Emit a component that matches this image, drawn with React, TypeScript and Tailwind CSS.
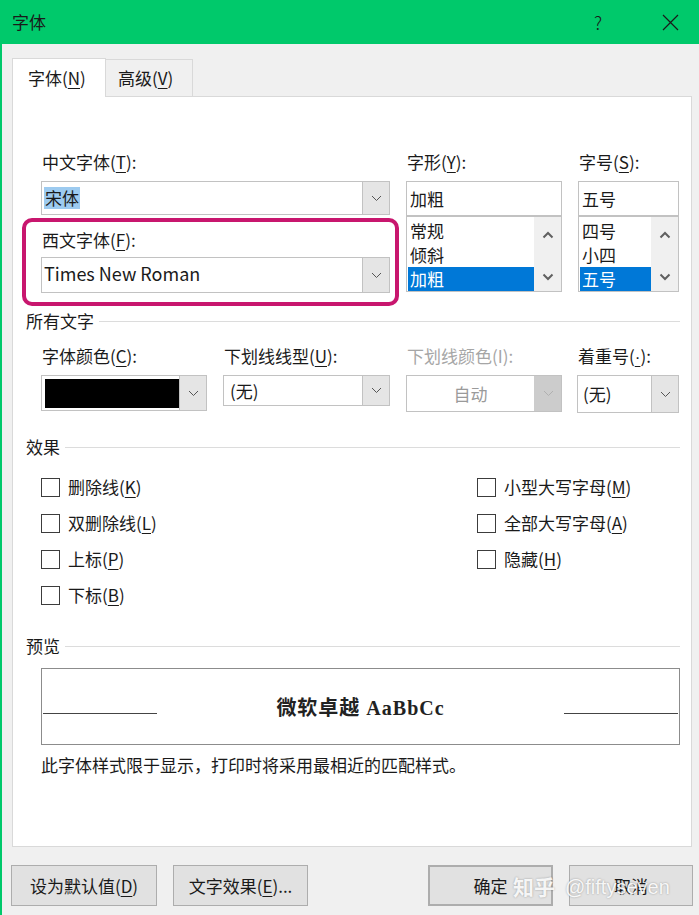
import React from 'react';
import clsx from 'clsx';

const U = ({ children }: { children: React.ReactNode }) => (
	<span className="underline decoration-1 underline-offset-[3px]">{children}</span>
);

const Chevron = ({ className }: { className?: string }) => (
	<svg width="11" height="7" viewBox="0 0 11 7" className={className}>
		<path d="M1 1 L5.5 5.5 L10 1" fill="none" stroke="currentColor" strokeWidth="1" />
	</svg>
);

const ScrollArrow = ({ up }: { up?: boolean }) => (
	<svg width="12" height="8" viewBox="0 0 12 8" className="text-[#606060]">
		<path d={up ? 'M1.5 6.5 L6 2 L10.5 6.5' : 'M1.5 1.5 L6 6 L10.5 1.5'} fill="none" stroke="currentColor" strokeWidth="2" />
	</svg>
);

const Label = ({ children, disabled }: { children: React.ReactNode; disabled?: boolean }) => (
	<div className={clsx('h-[24px] whitespace-nowrap pl-px leading-[24px]', disabled && 'text-[#a6a6a6]')}>{children}</div>
);

const Combo = ({
	className,
	children,
	disabled,
}: {
	className?: string;
	children?: React.ReactNode;
	disabled?: boolean;
}) => (
	<div className={clsx('flex border border-[#c2c2c2] bg-white', className)}>
		<div className="flex min-w-0 flex-1 items-center">{children}</div>
		<div
			className={clsx(
				'flex w-[27px] items-center justify-center border-l',
				disabled ? 'border-[#cccccc] bg-[#cccccc] text-[#b0b0b0]' : 'border-[#c2c2c2] bg-[#e5e5e5] text-[#555555]'
			)}
		>
			<Chevron />
		</div>
	</div>
);

const ListBox = ({ items, selected }: { items: string[]; selected: number }) => (
	<div className="flex h-[76px] border border-[#c2c2c2] bg-white">
		<div className="flex-1 pl-px pt-[2px]">
			{items.map((item, i) => (
				<div
					key={item}
					className={clsx('h-[24px] pl-[2px] leading-[24px]', i === selected && 'bg-[#0078d7] text-white')}
				>
					{item}
				</div>
			))}
		</div>
		<div className="flex w-[27px] flex-col items-center justify-between bg-[#f0f0f0] pb-[10px] pt-[14px]">
			<ScrollArrow up />
			<ScrollArrow />
		</div>
	</div>
);

const Heading = ({ children, className }: { children: React.ReactNode; className?: string }) => (
	<div className={clsx('ml-[4px] flex h-[24px] items-center gap-[5px]', className)}>
		<span className="leading-[24px]">{children}</span>
		<div className="h-px flex-1 bg-[#dcdcdc]" />
	</div>
);

const CheckBox = ({ children }: { children: React.ReactNode }) => (
	<div className="flex h-[24px] items-center gap-[8px]">
		<div className="h-[19px] w-[19px] border border-[#3c3c3c] bg-white" />
		<span className="leading-[24px]">{children}</span>
	</div>
);

const Button = ({ children, className }: { children: React.ReactNode; className?: string }) => (
	<div className={clsx('flex h-[41px] items-center justify-center border border-[#adadad] bg-[#e1e1e1]', className)}>
		{children}
	</div>
);

export default function App() {
	return (
		<div className="flex h-[915px] w-[699px] flex-col border-l-2 border-[#00c96b] bg-[#f0f0f0] text-[17px] text-[#1a1a1a] [font-family:'Noto_Sans_CJK_SC','Liberation_Sans',sans-serif]">
			{/* title bar */}
			<div className="flex h-[44px] shrink-0 items-center bg-[#00c96b] pl-[10px]">
				<span className="flex-1">字体</span>
				<span className="mr-[60px] text-[18px] font-light">?</span>
				<svg width="17" height="17" viewBox="0 0 17 17" className="mr-[20px]">
					<path d="M1 1 L16 16 M16 1 L1 16" stroke="#1a1a1a" strokeWidth="1.2" />
				</svg>
			</div>

			{/* tabs */}
			<div className="ml-[10px] mt-[14px] flex items-end">
				<div className="relative z-10 -mb-px flex h-[39px] w-[94px] items-center border border-b-0 border-[#d9d9d9] bg-white pl-[15px]">
					字体(<U>N</U>)
				</div>
				<div className="flex h-[37px] w-[87px] items-center border border-b-0 border-l-0 border-[#d9d9d9] bg-[#f0f0f0] pl-[12px]">
					高级(<U>V</U>)
				</div>
			</div>

			{/* panel */}
			<div className="ml-[10px] h-[751px] w-[680px] border border-[#d9d9d9] bg-white pl-[9px] pr-[11px] pt-[53px]">
				{/* fonts */}
				<div className="flex">
					<div className="w-[377px]">
						<div className="pl-[19px]">
							<Label>
								中文字体(<U>T</U>):
							</Label>
							<Combo className="mt-[7px] h-[34px] w-[349px]">
								<span className="ml-[2px] bg-[#9dcbf0] px-px leading-[22px]">宋体</span>
							</Combo>
						</div>
						<div className="mt-[3px] w-[377px] rounded-[10px] border-4 border-[#c8166e] pb-[9px] pl-[15px] pt-[6px]">
							<Label>
								西文字体(<U>F</U>):
							</Label>
							<Combo className="mt-[5px] h-[36px] w-[349px]">
								<span className="pb-[3px] pl-[2px] text-[18px]">Times New Roman</span>
							</Combo>
						</div>
					</div>
					<div className="ml-[7px] w-[156px]">
						<Label>
							字形(<U>Y</U>):
						</Label>
						<div className="mt-[7px] flex h-[35px] items-center border border-[#c2c2c2] bg-white pl-[3px]">加粗</div>
						<ListBox items={['常规', '倾斜', '加粗']} selected={2} />
					</div>
					<div className="ml-[16px] w-[101px]">
						<Label>
							字号(<U>S</U>):
						</Label>
						<div className="mt-[7px] flex h-[35px] items-center border border-[#c2c2c2] bg-white pl-[3px]">五号</div>
						<ListBox items={['四号', '小四', '五号']} selected={2} />
					</div>
				</div>

				{/* all text */}
				<Heading className="mt-[3px]">所有文字</Heading>
				<div className="mt-[11px] flex items-start gap-[16px] pl-[19px]">
					<div className="w-[166px]">
						<Label>
							字体颜色(<U>C</U>):
						</Label>
						<Combo className="mt-[7px] h-[36px]">
							<div className="ml-[3px] h-[29px] flex-1 bg-black" />
						</Combo>
					</div>
					<div className="w-[167px]">
						<Label>
							下划线线型(<U>U</U>):
						</Label>
						<Combo className="mt-[7px] h-[31px]">
							<span className="pl-[6px]">(无)</span>
						</Combo>
					</div>
					<div className="w-[156px]">
						<Label disabled>下划线颜色(I):</Label>
						<Combo className="mt-[7px] h-[37px]" disabled>
							<span className="flex-1 text-center text-[#9a9a9a]">自动</span>
						</Combo>
					</div>
					<div className="-ml-px w-[102px]">
						<Label>
							着重号(<span className="underline decoration-1 underline-offset-[3px] [font-family:'Liberation_Sans',sans-serif]">·</span>):
						</Label>
						<Combo className="mt-[7px] h-[38px]">
							<span className="pl-[5px]">(无)</span>
						</Combo>
					</div>
				</div>

				{/* effects */}
				<Heading className="mt-[22px]">效果</Heading>
				<div className="mt-[16px] grid grid-cols-[436px_1fr] gap-y-[12px] pl-[19px]">
					<CheckBox>
						删除线(<U>K</U>)
					</CheckBox>
					<CheckBox>
						小型大写字母(<U>M</U>)
					</CheckBox>
					<CheckBox>
						双删除线(<U>L</U>)
					</CheckBox>
					<CheckBox>
						全部大写字母(<U>A</U>)
					</CheckBox>
					<CheckBox>
						上标(<U>P</U>)
					</CheckBox>
					<CheckBox>
						隐藏(<U>H</U>)
					</CheckBox>
					<CheckBox>
						下标(<U>B</U>)
					</CheckBox>
				</div>

				{/* preview */}
				<Heading className="mt-[27px]">预览</Heading>
				<div className="ml-[19px] mt-[10px] flex h-[77px] items-center border border-[#8c8c8c] bg-white px-px">
					<div className="mt-[14px] h-[1px] w-[114px] bg-[#444444]" />
					<div className="flex-1 pt-[2px] text-center text-[20px] font-bold tracking-[1px] text-[#222222] [font-family:'Liberation_Serif','Noto_Sans_CJK_SC',serif]">
						微软卓越 AaBbCc
					</div>
					<div className="mt-[14px] h-[1px] w-[114px] bg-[#444444]" />
				</div>
				<div className="ml-[19px] mt-[8px] leading-[24px]">此字体样式限于显示，打印时将采用最相近的匹配样式。</div>
			</div>

			{/* buttons */}
			<div className="relative mt-[18px] flex">
				<Button className="ml-[9px] w-[146px]">
					设为默认值(<U>D</U>)
				</Button>
				<Button className="ml-[16px] w-[135px]">
					文字效果(<U>E</U>)...
				</Button>
				<Button className="ml-[120px] w-[125px] border-2 border-[#0078d7]">确定</Button>
				<Button className="ml-[16px] w-[124px]">取消</Button>
				<div className="pointer-events-none absolute left-[511px] top-[6px] flex items-center gap-[10px] whitespace-nowrap text-white/90 [text-shadow:0_0_2px_rgba(0,0,0,0.35)]">
					<span className="text-[21px] font-bold">知乎</span>
					<span className="text-[20px] [font-family:'Liberation_Sans',sans-serif]">@fiftyseven</span>
				</div>
			</div>
		</div>
	);
}
